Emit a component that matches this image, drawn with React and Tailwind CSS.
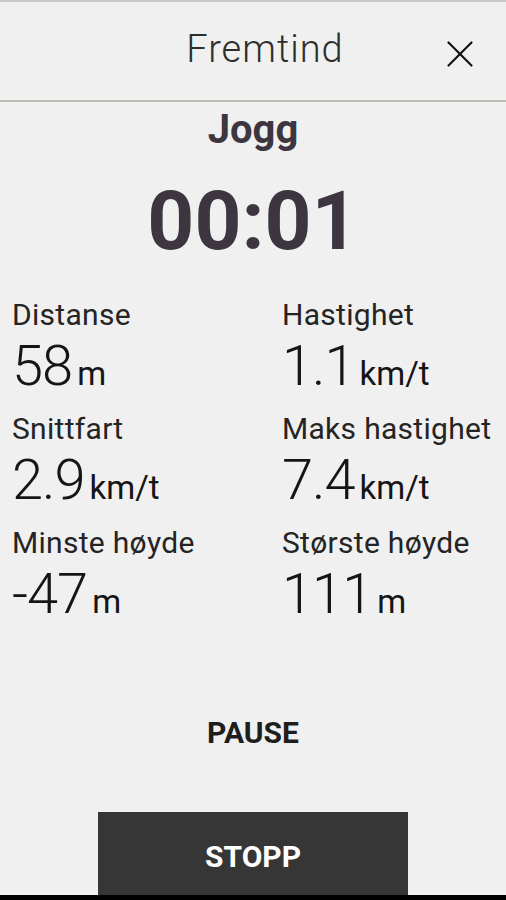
import React from 'react';
import { X } from 'lucide-react';

const stats = [
    { label: 'Distanse', value: '58', unit: 'm' },
    { label: 'Hastighet', value: '1.1', unit: 'km/t' },
    { label: 'Snittfart', value: '2.9', unit: 'km/t' },
    { label: 'Maks hastighet', value: '7.4', unit: 'km/t' },
    { label: 'Minste høyde', value: '-47', unit: 'm' },
    { label: 'Største høyde', value: '111', unit: 'm' }
];

const Stat = ({ label, value, unit }) => (
    <div className="flex flex-col">
        <div className="text-[30px] leading-none text-[#242424] tracking-[0.3px]">{label}</div>
        <div className="flex items-baseline mt-[8px]">
            <span className="text-[56px] leading-none font-light text-[#151515] tracking-[-1px]">{value}</span>
            <span className="text-[33px] leading-none text-[#151515] ml-[5px]">{unit}</span>
        </div>
    </div>
);

const App = () => {
    return (
        <div className="w-[506px] h-[900px] bg-[#f0f0f0] flex flex-col overflow-hidden font-['Roboto','Liberation_Sans',sans-serif]">
            <header className="relative h-[102px] flex items-center justify-center border-t-2 border-b-2 border-t-[#c8c8c8] border-b-[#bcbcb4]">
                <h1 className="pl-[24px] text-[38px] font-light text-[#2e2e2e] tracking-[1px] -mt-[4px]">Fremtind</h1>
                <button className="absolute right-[23px] top-[29px] text-[#111]">
                    <X className="w-[46px] h-[46px]" strokeWidth={1.15} />
                </button>
            </header>

            <div className="flex flex-col items-center">
                <div className="mt-2 text-[40px] leading-none font-bold text-[#3d3640]">Jogg</div>
                <div className="mt-[30px] text-[82px] leading-none font-bold text-[#3d3640]">00:01</div>
            </div>

            <div className="mt-[38px] grid grid-cols-[270px_1fr] gap-y-[20px] pl-3">
                {stats.map(s => (
                    <Stat key={s.label} {...s} />
                ))}
            </div>

            <div className="mt-[96px] text-center text-[30px] leading-none font-bold text-[#1e1e1e]">PAUSE</div>

            <div className="mt-auto flex justify-center">
                <button className="w-[310px] h-[83px] bg-[#363636] text-white text-[30px] font-bold pt-[6px]">
                    STOPP
                </button>
            </div>
            <div className="h-[5px] bg-black" />
        </div>
    );
};

export default App;
